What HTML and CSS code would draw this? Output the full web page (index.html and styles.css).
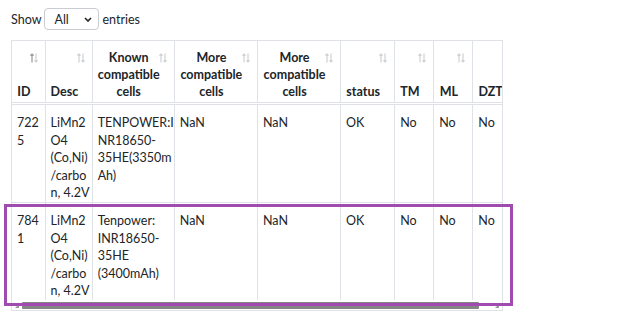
FILE: index.html
```html
<!DOCTYPE html>
<html lang="en">
<head>
<meta charset="utf-8">
<title>Cells</title>
<link rel="stylesheet" href="styles.css">
</head>
<body>
<div class="page">
  <div class="length">
    <span>Show</span>
    <div class="select"><span>All</span><svg width="8" height="5" viewBox="0 0 8 5"><path d="M1 1l3 3 3-3" fill="none" stroke="#222" stroke-width="1.6"/></svg></div>
    <span>entries</span>
  </div>
  <div class="scroller">
    <div class="viewport">
      <table class="grid">
        <colgroup>
          <col class="c-id"><col class="c-desc"><col class="c-known"><col class="c-more"><col class="c-more"><col class="c-status"><col class="c-flag"><col class="c-flag"><col class="c-dzt">
        </colgroup>
        <thead>
          <tr>
            <th><svg class="sort active" viewBox="0 0 8 10" width="8" height="10"><path class="up" d="M2 9.5V1M0.4 2.6L2 1l1.6 1.6"/><path class="down" d="M6 0.5V9M4.4 7.4L6 9l1.6-1.6"/></svg>ID</th>
            <th><svg class="sort" viewBox="0 0 8 10" width="8" height="10"><path class="up" d="M2 9.5V1M0.4 2.6L2 1l1.6 1.6"/><path class="down" d="M6 0.5V9M4.4 7.4L6 9l1.6-1.6"/></svg>Desc</th>
            <th><svg class="sort" viewBox="0 0 8 10" width="8" height="10"><path class="up" d="M2 9.5V1M0.4 2.6L2 1l1.6 1.6"/><path class="down" d="M6 0.5V9M4.4 7.4L6 9l1.6-1.6"/></svg>Known<br>compatible<br>cells</th>
            <th><svg class="sort" viewBox="0 0 8 10" width="8" height="10"><path class="up" d="M2 9.5V1M0.4 2.6L2 1l1.6 1.6"/><path class="down" d="M6 0.5V9M4.4 7.4L6 9l1.6-1.6"/></svg>More<br>compatible<br>cells</th>
            <th><svg class="sort" viewBox="0 0 8 10" width="8" height="10"><path class="up" d="M2 9.5V1M0.4 2.6L2 1l1.6 1.6"/><path class="down" d="M6 0.5V9M4.4 7.4L6 9l1.6-1.6"/></svg>More<br>compatible<br>cells</th>
            <th><svg class="sort" viewBox="0 0 8 10" width="8" height="10"><path class="up" d="M2 9.5V1M0.4 2.6L2 1l1.6 1.6"/><path class="down" d="M6 0.5V9M4.4 7.4L6 9l1.6-1.6"/></svg>status</th>
            <th><svg class="sort" viewBox="0 0 8 10" width="8" height="10"><path class="up" d="M2 9.5V1M0.4 2.6L2 1l1.6 1.6"/><path class="down" d="M6 0.5V9M4.4 7.4L6 9l1.6-1.6"/></svg>TM</th>
            <th><svg class="sort" viewBox="0 0 8 10" width="8" height="10"><path class="up" d="M2 9.5V1M0.4 2.6L2 1l1.6 1.6"/><path class="down" d="M6 0.5V9M4.4 7.4L6 9l1.6-1.6"/></svg>ML</th>
            <th><svg class="sort" viewBox="0 0 8 10" width="8" height="10"><path class="up" d="M2 9.5V1M0.4 2.6L2 1l1.6 1.6"/><path class="down" d="M6 0.5V9M4.4 7.4L6 9l1.6-1.6"/></svg>DZT</th>
          </tr>
        </thead>
        <tbody>
          <tr>
            <td>722<br>5</td>
            <td>LiMn2<br>O4<br>(Co,Ni)<br>/carbo<br>n, 4.2V</td>
            <td>TENPOWER:I<br>NR18650-<br>35HE(3350m<br>Ah)</td>
            <td>NaN</td>
            <td>NaN</td>
            <td>OK</td>
            <td>No</td>
            <td>No</td>
            <td>No</td>
          </tr>
          <tr>
            <td>784<br>1</td>
            <td>LiMn2<br>O4<br>(Co,Ni)<br>/carbo<br>n, 4.2V</td>
            <td>Tenpower:<br>INR18650-<br>35HE<br>(3400mAh)</td>
            <td>NaN</td>
            <td>NaN</td>
            <td>OK</td>
            <td>No</td>
            <td>No</td>
            <td>No</td>
          </tr>
        </tbody>
      </table>
    </div>
    <div class="scrollbar">
      <svg class="arrow" width="6" height="6" viewBox="0 0 6 6"><path d="M5 1v4H1z" fill="#9a9a9a"/></svg>
      <div class="thumb"></div>
      <svg class="arrow" width="6" height="6" viewBox="0 0 6 6"><path d="M1 5h4V1z" fill="#9a9a9a"/></svg>
    </div>
  </div>
  <div class="highlight"></div>
</div>
</body>
</html>
```

FILE: styles.css
```css
* { box-sizing: border-box; }

html, body {
  margin: 0;
  padding: 0;
  background: #ffffff;
}

body {
  font-family: Lato, "Open Sans", "Noto Sans", sans-serif;
  font-size: 12.5px;
  color: #212529;
}

.page {
  position: relative;
  padding: 8px 0 0 11px;
}

.length {
  display: flex;
  align-items: center;
  gap: 3px;
  height: 22px;
  margin-bottom: 10px;
}

.select {
  display: flex;
  align-items: center;
  justify-content: space-between;
  width: 55px;
  height: 22px;
  padding: 0 6px 0 9px;
  border: 1px solid #c9cdd2;
  border-radius: 4px;
  background: #fff;
}

.scroller {
  width: 492px;
  border: 1px solid #dfe2e6;
}

.viewport {
  overflow: hidden;
}

.grid {
  width: 505px;
  table-layout: fixed;
  border-collapse: collapse;
  border-style: hidden;
}

.c-id { width: 33px; }
.c-desc { width: 47px; }
.c-known { width: 82px; }
.c-more { width: 83px; }
.c-status { width: 54px; }
.c-flag { width: 39px; }
.c-dzt { width: 44px; }

.grid th,
.grid td {
  border: 1px solid #dfe2e6;
  white-space: nowrap;
  overflow: hidden;
}

.grid th {
  position: relative;
  padding: 8px 14px 2px 5px;
  font-weight: 700;
  line-height: 17px;
  text-align: center;
  vertical-align: bottom;
  border-bottom: 3px double #dfe2e6;
}

.grid td {
  padding: 9px 3px 0 5px;
  line-height: 17.6px;
  text-align: left;
  vertical-align: top;
}

.sort {
  position: absolute;
  top: 12px;
  right: 7px;
  fill: none;
  stroke-width: 1.1;
}

.sort .up,
.sort .down {
  stroke: #cbcdd0;
}

.sort.active .up {
  stroke: #8c8f93;
}

.scrollbar {
  display: flex;
  align-items: flex-end;
  height: 10px;
  padding: 0 2px 1px 2px;
  background: #fff;
}

.arrow {
  flex: none;
}

.thumb {
  width: 457px;
  height: 7px;
  margin: 0 auto 0 2px;
  background: #858585;
  border-radius: 1px;
}

.highlight {
  position: absolute;
  left: 4px;
  top: 204px;
  width: 509px;
  height: 102px;
  border: 3px solid #a04bb0;
  pointer-events: none;
}
```
